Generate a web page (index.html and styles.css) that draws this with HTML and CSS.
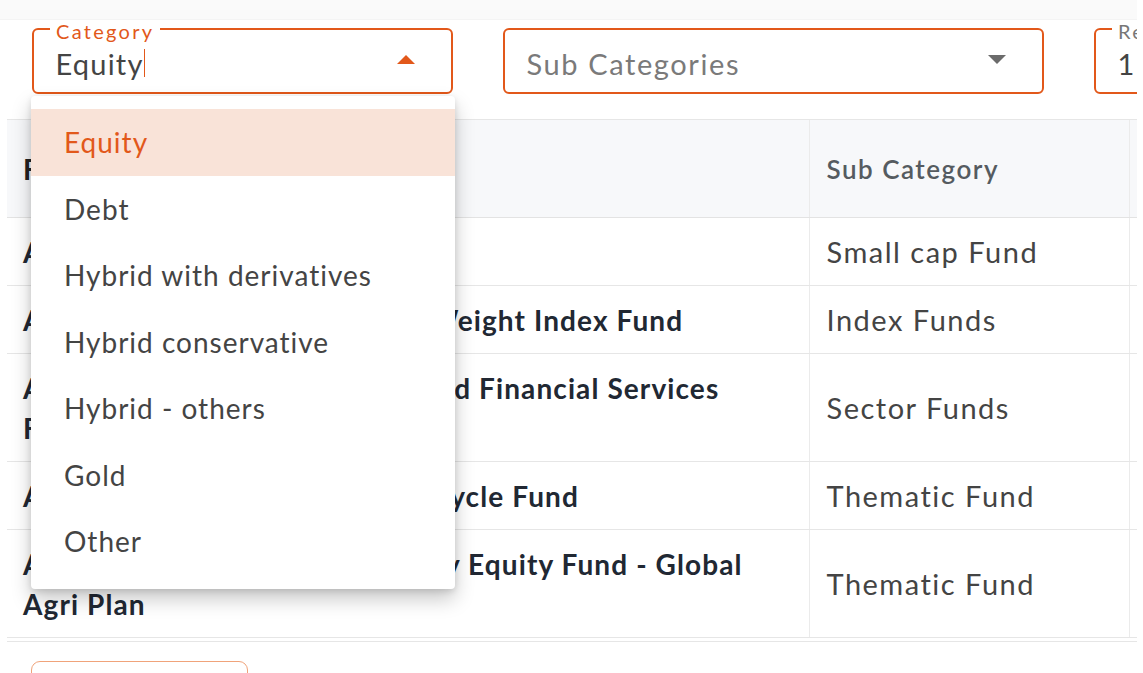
FILE: index.html
```html
<!DOCTYPE html>
<html lang="en">
<head>
<meta charset="utf-8">
<title>Fund Explorer</title>
<link rel="stylesheet" href="styles.css">
</head>
<body>
<div class="page">
  <div class="topband"></div>
  <div class="filters">
    <div class="field-wrap">
      <div class="field field-cat is-open">
        <span class="field-label">Category</span>
        <span class="field-value">Equity</span><span class="caret"></span>
        <svg class="arrow" width="18" height="9" viewBox="0 0 18 9"><path d="M0 9 L9 0 L18 9 Z" fill="#e2581a"/></svg>
      </div>
      <ul class="menu">
        <li class="menu-item is-active">Equity</li>
        <li class="menu-item">Debt</li>
        <li class="menu-item">Hybrid with derivatives</li>
        <li class="menu-item">Hybrid conservative</li>
        <li class="menu-item">Hybrid - others</li>
        <li class="menu-item">Gold</li>
        <li class="menu-item">Other</li>
      </ul>
    </div>
    <div class="field-wrap">
      <div class="field field-sub">
        <span class="field-placeholder">Sub Categories</span>
        <svg class="arrow arrow-grey" width="18" height="9" viewBox="0 0 18 9"><path d="M0 0 L18 0 L9 9 Z" fill="#6b6b6b"/></svg>
      </div>
    </div>
    <div class="field-wrap">
      <div class="field field-ret">
        <span class="field-label field-label-grey">Returns</span>
        <span class="field-value">1 Year</span>
      </div>
    </div>
  </div>

  <div class="table-wrap">
    <table class="funds">
      <colgroup>
        <col class="col-name">
        <col class="col-sub">
        <col class="col-ret">
      </colgroup>
      <thead>
        <tr>
          <th class="th-name">Fund Name</th>
          <th class="th-sub">Sub Category</th>
          <th class="th-ret">Returns</th>
        </tr>
      </thead>
      <tbody>
        <tr>
          <td class="name">Axis Small Cap Fund</td>
          <td class="sub">Small cap Fund</td>
          <td class="ret">38.2%</td>
        </tr>
        <tr>
          <td class="name">Aditya Birla SL Nifty 50 Equal Weight Index Fund</td>
          <td class="sub">Index Funds</td>
          <td class="ret">24.1%</td>
        </tr>
        <tr>
          <td class="name">Aditya Birla Sun Life Banking and Financial Services Fund</td>
          <td class="sub">Sector Funds</td>
          <td class="ret">19.6%</td>
        </tr>
        <tr>
          <td class="name">Aditya Birla Sun Life Business Cycle Fund</td>
          <td class="sub">Thematic Fund</td>
          <td class="ret">21.4%</td>
        </tr>
        <tr>
          <td class="name">Aditya Birla Sun Life Commodity Equity Fund - Global Agri Plan</td>
          <td class="sub">Thematic Fund</td>
          <td class="ret">17.9%</td>
        </tr>
      </tbody>
    </table>
  </div>

  <div class="actions">
    <button class="btn-outline" type="button">Load more</button>
  </div>
</div>
</body>
</html>
```

FILE: styles.css
```css
* { box-sizing: border-box; }

body {
  margin: 0;
  background: #ffffff;
  font-family: Lato, "Open Sans", "Liberation Sans", sans-serif;
  color: #444444;
}

.page {
  width: 1137px;
  height: 673px;
  overflow: hidden;
  position: relative;
}

.topband {
  height: 20px;
  background: #fafafa;
  border-bottom: 1px solid #f4f4f4;
}

/* ---------- filter fields ---------- */
.filters {
  display: flex;
  gap: 50px;
  padding: 8px 0 0 32px;
}

.field-wrap {
  position: relative;
  flex-shrink: 0;
}

.field {
  position: relative;
  height: 66px;
  border: 2.5px solid #e2581a;
  border-radius: 6px;
  display: flex;
  align-items: center;
  padding: 4px 36px 0 21.5px;
}

.field-cat { width: 421px; }
.field-sub { width: 541px; }
.field-ret { width: 300px; }

.field-label {
  position: absolute;
  top: -9px;
  left: 16px;
  padding: 0 6px;
  background: #ffffff;
  color: #e2581a;
  font-size: 20px;
  letter-spacing: 2.3px;
  line-height: 20px;
}

.field-label-grey { color: #777777; }

.field-value {
  font-size: 29px;
  letter-spacing: 1.2px;
  color: #444444;
}

.field-placeholder {
  font-size: 29px;
  letter-spacing: 1.6px;
  color: #7a7a7a;
}

.caret {
  display: inline-block;
  width: 0;
  height: 28px;
  border-left: 1.5px solid #e2581a;
  margin-left: 0;
}

.arrow {
  margin-left: auto;
  margin-top: -8px;
}

/* ---------- dropdown menu ---------- */
.menu {
  position: absolute;
  top: calc(100% + 2px);
  left: -1px;
  width: 424px;
  margin: 0;
  padding: 13px 0 14px;
  list-style: none;
  background: #ffffff;
  border-radius: 4px;
  box-shadow: 0 10px 20px rgba(0, 0, 0, 0.22), 0 2px 6px rgba(0, 0, 0, 0.12);
  z-index: 10;
}

.menu-item {
  height: 66.5px;
  line-height: 66.5px;
  padding-left: 33px;
  font-size: 28px;
  letter-spacing: 1px;
  color: #444444;
}

.menu-item.is-active {
  background: #f9e3d8;
  color: #e2581a;
}

/* ---------- table ---------- */
.table-wrap {
  margin: 25px 0 0 7px;
  width: 1130px;
  border-bottom: 1.5px solid #e6e6e6;
  padding-bottom: 3px;
}

.funds {
  width: 1140px;
  border-collapse: collapse;
  table-layout: fixed;
}

.col-name { width: 802px; }
.col-sub { width: 320px; }
.col-ret { width: 18px; }

.funds th {
  height: 98px;
  background: #f7f8fa;
  border-top: 1.5px solid #e6e6e6;
  border-bottom: 1.5px solid #e3e3e3;
  text-align: left;
  padding: 0 16px 0 17px;
  font-weight: 600;
  font-size: 26px;
  letter-spacing: 1.5px;
  color: #555b60;
}

.funds th + th,
.funds td + td {
  border-left: 1px solid #ebebeb;
}

.funds th.th-name {
  color: #222222;
  font-weight: 700;
  font-size: 28px;
  letter-spacing: 1.1px;
  padding-left: 16px;
}

.funds td {
  border-bottom: 1.5px solid #e6e6e6;
  padding: 13.5px 16px 13.5px 17px;
  line-height: 40px;
  font-size: 29px;
  letter-spacing: 1.5px;
  vertical-align: middle;
}

.funds td.name {
  padding: 13.5px 46px 13.5px 16px;
  font-weight: 700;
  font-size: 28px;
  letter-spacing: 1.1px;
  color: #212833;
}

.funds td.sub { color: #444444; }

.funds th.th-ret,
.funds td.ret {
  color: transparent;
  overflow: hidden;
  white-space: nowrap;
}

/* ---------- bottom action ---------- */
.actions {
  padding: 19px 0 0 31px;
}

.btn-outline {
  width: 217px;
  height: 44px;
  background: #ffffff;
  border: 1.5px solid #f0a37a;
  border-radius: 9px;
  color: #e2581a;
  font-family: inherit;
  font-size: 20px;
}
```
